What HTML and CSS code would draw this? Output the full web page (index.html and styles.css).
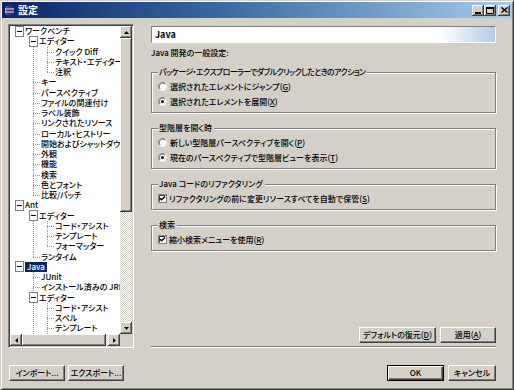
FILE: index.html
```html
<!DOCTYPE html>
<html lang="ja">
<head>
<meta charset="utf-8">
<title>設定</title>
<link rel="stylesheet" href="styles.css">
</head>
<body>
<div class="window">
  <div class="titlebar">
    <svg class="appicon" width="11" height="11" viewBox="0 0 11 11">
      <circle cx="5.5" cy="5.5" r="5" fill="#3d3384"/>
      <path d="M1 4h9M1 7h9" stroke="#e8e4f4" stroke-width="1"/>
      <path d="M5 0.6A5 5 0 0 0 5 10.4A4 5 0 0 1 5 0.6z" fill="#b8b0e0"/>
    </svg>
    <span class="title">設定</span>
    <div class="caption-btns">
      <span class="cbtn"><svg width="6" height="2" viewBox="0 0 6 2"><rect width="6" height="2" fill="#000"/></svg></span>
      <span class="cbtn"><svg width="8" height="7" viewBox="0 0 8 7"><path d="M0.5 0.5h7v6h-7z" fill="none" stroke="#000"/><rect width="8" height="2" fill="#000"/></svg></span>
      <span class="cbtn close"><svg width="7" height="6" viewBox="0 0 7 6"><path d="M0.5 0.5L6.5 5.5M6.5 0.5L0.5 5.5" stroke="#000" stroke-width="1.4"/></svg></span>
    </div>
  </div>

  <div class="client">
    <div class="main">
      <div class="tree">
        <div class="tree-view">
          <div class="row"><i class="c box"></i><span class="lbl">ワークベンチ</span></div>
          <div class="row"><i class="c e"></i><i class="c box v"></i><span class="lbl">エディター</span></div>
          <div class="row"><i class="c e"></i><i class="c v"></i><i class="c tee"></i><span class="lbl">クイック Diff</span></div>
          <div class="row"><i class="c e"></i><i class="c v"></i><i class="c tee"></i><span class="lbl">テキスト・エディター</span></div>
          <div class="row"><i class="c e"></i><i class="c v"></i><i class="c ell"></i><span class="lbl">注釈</span></div>
          <div class="row"><i class="c e"></i><i class="c tee"></i><span class="lbl">キー</span></div>
          <div class="row"><i class="c e"></i><i class="c tee"></i><span class="lbl">パースペクティブ</span></div>
          <div class="row"><i class="c e"></i><i class="c tee"></i><span class="lbl">ファイルの関連付け</span></div>
          <div class="row"><i class="c e"></i><i class="c tee"></i><span class="lbl">ラベル装飾</span></div>
          <div class="row"><i class="c e"></i><i class="c tee"></i><span class="lbl">リンクされたリソース</span></div>
          <div class="row"><i class="c e"></i><i class="c tee"></i><span class="lbl">ローカル・ヒストリー</span></div>
          <div class="row"><i class="c e"></i><i class="c tee"></i><span class="lbl">開始およびシャットダウン</span></div>
          <div class="row"><i class="c e"></i><i class="c tee"></i><span class="lbl">外観</span></div>
          <div class="row"><i class="c e"></i><i class="c tee"></i><span class="lbl">機能</span></div>
          <div class="row"><i class="c e"></i><i class="c tee"></i><span class="lbl">検索</span></div>
          <div class="row"><i class="c e"></i><i class="c tee"></i><span class="lbl">色とフォント</span></div>
          <div class="row"><i class="c e"></i><i class="c ell"></i><span class="lbl">比較/パッチ</span></div>
          <div class="row"><i class="c box"></i><span class="lbl">Ant</span></div>
          <div class="row"><i class="c e"></i><i class="c box v"></i><span class="lbl">エディター</span></div>
          <div class="row"><i class="c e"></i><i class="c v"></i><i class="c tee"></i><span class="lbl">コード・アシスト</span></div>
          <div class="row"><i class="c e"></i><i class="c v"></i><i class="c tee"></i><span class="lbl">テンプレート</span></div>
          <div class="row"><i class="c e"></i><i class="c v"></i><i class="c ell"></i><span class="lbl">フォーマッター</span></div>
          <div class="row"><i class="c e"></i><i class="c ell"></i><span class="lbl">ランタイム</span></div>
          <div class="row"><i class="c box"></i><span class="lbl selected">Java</span></div>
          <div class="row"><i class="c e"></i><i class="c tee"></i><span class="lbl">JUnit</span></div>
          <div class="row"><i class="c e"></i><i class="c tee"></i><span class="lbl">インストール済みの JRE</span></div>
          <div class="row"><i class="c e"></i><i class="c box v"></i><span class="lbl">エディター</span></div>
          <div class="row"><i class="c e"></i><i class="c v"></i><i class="c tee"></i><span class="lbl">コード・アシスト</span></div>
          <div class="row"><i class="c e"></i><i class="c v"></i><i class="c tee"></i><span class="lbl">スペル</span></div>
          <div class="row"><i class="c e"></i><i class="c v"></i><i class="c tee"></i><span class="lbl">テンプレート</span></div>
          <div class="row"><i class="c e"></i><i class="c v"></i><i class="c tee"></i><span class="lbl">フォーマッター</span></div>
        </div>
        <div class="vscroll">
          <span class="sbtn"><svg width="5" height="3" viewBox="0 0 5 3"><path d="M0 3L2.5 0L5 3z" fill="#000"/></svg></span>
          <span class="thumb vthumb"></span>
          <span class="track"></span>
          <span class="sbtn"><svg width="5" height="3" viewBox="0 0 5 3"><path d="M0 0L2.5 3L5 0z" fill="#000"/></svg></span>
        </div>
        <div class="hscroll">
          <span class="sbtn"><svg width="3" height="5" viewBox="0 0 3 5"><path d="M3 0L0 2.5L3 5z" fill="#000"/></svg></span>
          <span class="thumb hthumb"></span>
          <span class="track"></span>
          <span class="sbtn"><svg width="3" height="5" viewBox="0 0 3 5"><path d="M0 0L3 2.5L0 5z" fill="#000"/></svg></span>
        </div>
        <div class="corner"></div>
      </div>

      <div class="page">
        <div class="page-header">Java</div>
        <div class="desc">Java 開発の一般設定:</div>

        <div class="group">
          <span class="legend legend-long">パッケージ・エクスプローラーでダブルクリックしたときのアクション</span>
          <div class="opt">
            <svg class="radio" width="9" height="9" viewBox="0 0 12 12"><circle cx="6" cy="6" r="5.5" fill="#fff"/><path d="M2.1 9.9A5.5 5.5 0 0 1 9.9 2.1" fill="none" stroke="#808080"/><path d="M2.8 9.2A4.5 4.5 0 0 1 9.2 2.8" fill="none" stroke="#404040"/></svg>
            <span>選択されたエレメントにジャンプ(<u>G</u>)</span>
          </div>
          <div class="opt">
            <svg class="radio" width="9" height="9" viewBox="0 0 12 12"><circle cx="6" cy="6" r="5.5" fill="#fff"/><path d="M2.1 9.9A5.5 5.5 0 0 1 9.9 2.1" fill="none" stroke="#808080"/><path d="M2.8 9.2A4.5 4.5 0 0 1 9.2 2.8" fill="none" stroke="#404040"/><circle cx="6" cy="6" r="2" fill="#000"/></svg>
            <span>選択されたエレメントを展開(<u>X</u>)</span>
          </div>
        </div>

        <div class="group">
          <span class="legend">型階層を開く時</span>
          <div class="opt">
            <svg class="radio" width="9" height="9" viewBox="0 0 12 12"><circle cx="6" cy="6" r="5.5" fill="#fff"/><path d="M2.1 9.9A5.5 5.5 0 0 1 9.9 2.1" fill="none" stroke="#808080"/><path d="M2.8 9.2A4.5 4.5 0 0 1 9.2 2.8" fill="none" stroke="#404040"/></svg>
            <span>新しい型階層パースペクティブを開く(<u>P</u>)</span>
          </div>
          <div class="opt">
            <svg class="radio" width="9" height="9" viewBox="0 0 12 12"><circle cx="6" cy="6" r="5.5" fill="#fff"/><path d="M2.1 9.9A5.5 5.5 0 0 1 9.9 2.1" fill="none" stroke="#808080"/><path d="M2.8 9.2A4.5 4.5 0 0 1 9.2 2.8" fill="none" stroke="#404040"/><circle cx="6" cy="6" r="2" fill="#000"/></svg>
            <span>現在のパースペクティブで型階層ビューを表示(<u>T</u>)</span>
          </div>
        </div>

        <div class="group">
          <span class="legend">Java コードのリファクタリング</span>
          <div class="opt chk">
            <svg class="check" width="9" height="9" viewBox="0 0 9 9"><rect x="0.5" y="0.5" width="8" height="8" fill="#fff" stroke="#808080"/><path d="M1.5 7.5V1.5H7.5" fill="none" stroke="#404040"/><path d="M2 4.2L3.6 5.8L7 2.4" fill="none" stroke="#000" stroke-width="1.4"/></svg>
            <span>リファクタリングの前に変更リソースすべてを自動で保管(<u>S</u>)</span>
          </div>
        </div>

        <div class="group">
          <span class="legend">検索</span>
          <div class="opt chk">
            <svg class="check" width="9" height="9" viewBox="0 0 9 9"><rect x="0.5" y="0.5" width="8" height="8" fill="#fff" stroke="#808080"/><path d="M1.5 7.5V1.5H7.5" fill="none" stroke="#404040"/><path d="M2 4.2L3.6 5.8L7 2.4" fill="none" stroke="#000" stroke-width="1.4"/></svg>
            <span>縮小検索メニューを使用(<u>R</u>)</span>
          </div>
        </div>

        <div class="page-buttons">
          <span class="btn btn-restore">デフォルトの復元(<u>D</u>)</span>
          <span class="btn btn-apply">適用(<u>A</u>)</span>
        </div>
        <div class="separator"></div>
      </div>
    </div>

    <div class="bottom">
      <span class="btn btn-wide">インポート...</span>
      <span class="btn btn-wide">エクスポート...</span>
      <span class="spacer"></span>
      <span class="btn btn-ok default">OK</span>
      <span class="btn btn-cancel">キャンセル</span>
    </div>
  </div>
</div>
</body>
</html>
```

FILE: styles.css
```css
* { box-sizing: border-box; }

html, body {
  margin: 0;
  padding: 0;
}

body {
  width: 514px;
  height: 390px;
  overflow: hidden;
  background: #d4d0c8;
  font-family: "Noto Sans CJK JP", "Noto Sans", sans-serif;
  font-size: 8px;
  font-weight: 500;
  font-feature-settings: "palt" 1;
  color: #000;
}

.window {
  width: 514px;
  height: 390px;
  display: flex;
  flex-direction: column;
  background: #d4d0c8;
  border: 1px solid;
  border-color: #d4d0c8 #404040 #404040 #d4d0c8;
  box-shadow: inset 1px 1px #fff, inset -1px -1px #808080;
  padding: 1px;
}

/* ---------- title bar ---------- */
.titlebar {
  height: 16px;
  flex: none;
  display: flex;
  align-items: center;
  padding: 0 2px 0 2px;
  background: linear-gradient(to right, #0a246a 0%, #3a6ea5 45%, #a6caf0 100%);
}

.appicon { flex: none; margin-right: 3px; }

.title {
  color: #fff;
  font-weight: bold;
  font-size: 10px;
  line-height: 16px;
}

.caption-btns {
  margin-left: auto;
  display: flex;
  align-items: center;
}

.cbtn {
  width: 12px;
  height: 11px;
  display: flex;
  align-items: center;
  justify-content: center;
  background: #d4d0c8;
  box-shadow: inset -1px -1px #404040, inset 1px 1px #fff, inset -2px -2px #808080;
}

.cbtn:first-child { align-items: flex-end; padding-bottom: 2px; }
.cbtn.close { margin-left: 2px; }

/* ---------- client ---------- */
.client {
  flex: 1;
  display: flex;
  flex-direction: column;
}

.main {
  display: flex;
  gap: 17px;
  padding: 6px 0 0 6px;
}

/* ---------- tree ---------- */
.tree {
  width: 126px;
  height: 324px;
  flex: none;
  display: grid;
  grid-template-columns: 110px 12px;
  grid-template-rows: 308px 12px;
  border: 1px solid;
  border-color: #808080 #fff #fff #808080;
  box-shadow: inset 1px 1px #404040, inset -1px -1px #d4d0c8;
  padding: 1px;
  background: #d4d0c8;
}

.tree-view {
  background: #fff;
  overflow: hidden;
  padding-left: 3px;
  line-height: 10.25px;
}

.row {
  display: flex;
  height: 10.25px;
  white-space: nowrap;
  align-items: stretch;
}

.c {
  flex: none;
  width: 14px;
  display: flex;
  align-items: center;
}

.v {
  background: repeating-linear-gradient(to bottom, #9a9a9a 0 1px, transparent 1px 2px) 6px 0 / 1px 100% no-repeat;
}

.tee {
  width: 13px;
  background:
    repeating-linear-gradient(to bottom, #9a9a9a 0 1px, transparent 1px 2px) 6px 0 / 1px 100% no-repeat,
    repeating-linear-gradient(to right, #9a9a9a 0 1px, transparent 1px 2px) 6px 5px / 7px 1px no-repeat;
}

.ell {
  width: 13px;
  background:
    repeating-linear-gradient(to bottom, #9a9a9a 0 1px, transparent 1px 2px) 6px 0 / 1px 5px no-repeat,
    repeating-linear-gradient(to right, #9a9a9a 0 1px, transparent 1px 2px) 6px 5px / 7px 1px no-repeat;
}

.box { width: 11px; }

.box::after {
  content: "";
  width: 9px;
  height: 9px;
  margin-left: 2px;
  border: 1px solid #808080;
  background: linear-gradient(#000, #000) center / 5px 1px no-repeat, #fff;
}

.lbl {
  padding: 0 1px;
  line-height: 10.25px;
}

.lbl.selected {
  background: #0a246a;
  color: #fff;
  margin-left: 1px;
  padding: 0 2px;
}

/* ---------- scrollbars ---------- */
.vscroll {
  display: grid;
  grid-template-rows: 12px 174px 1fr 12px;
}

.hscroll {
  display: grid;
  grid-template-columns: 12px 84px 1fr 12px;
}

.sbtn, .thumb {
  display: flex;
  align-items: center;
  justify-content: center;
  background: #d4d0c8;
  box-shadow: inset -1px -1px #404040, inset 1px 1px #fff, inset -2px -2px #808080;
}

.track {
  background: repeating-conic-gradient(#fff 0 25%, #d4d0c8 0 50%) 0 0 / 2px 2px;
}

.corner { background: #d4d0c8; }

/* ---------- page ---------- */
.page {
  width: 345px;
  height: 324px;
  flex: none;
  display: flex;
  flex-direction: column;
}

.page-header {
  margin-top: 2px;
  height: 17px;
  flex: none;
  border: 1px solid;
  border-color: #808080 #fff #fff #808080;
  background: linear-gradient(to right, #fff 0%, #fff 84%, #b4cbe9 100%);
  font-weight: bold;
  font-size: 9px;
  line-height: 15px;
  padding-left: 3px;
}

.desc {
  margin-top: 4px;
  height: 12px;
  line-height: 12px;
}

.group {
  margin-top: 13px;
  display: flex;
  flex-direction: column;
  border: 1px solid #808080;
  box-shadow: inset 1px 1px #fff, 1px 1px #fff;
  padding: 6px 0 3px 6px;
}

.group + .group { margin-top: 15px; }

.legend {
  align-self: flex-start;
  height: 10px;
  line-height: 10px;
  margin: -12px 0 2px 0;
  padding: 0 2px 0 1px;
  background: #d4d0c8;
}

.legend-long { letter-spacing: -0.65px; }

.opt {
  height: 15px;
  display: flex;
  align-items: center;
  gap: 3px;
  white-space: nowrap;
}

.opt.chk { gap: 2px; }

.radio, .check { flex: none; }

u { text-decoration: underline; text-underline-offset: 1px; }

.page-buttons {
  margin-top: auto;
  display: flex;
  justify-content: flex-end;
  gap: 4px;
}

.btn {
  height: 16px;
  display: flex;
  align-items: center;
  justify-content: center;
  background: #d4d0c8;
  border: 1px solid;
  border-color: #fff #404040 #404040 #fff;
  box-shadow: inset -1px -1px #808080;
  white-space: nowrap;
  line-height: 14px;
}

.btn-restore { width: 77px; }
.btn-apply { width: 56px; }

.separator {
  margin-top: 3px;
  height: 2px;
  border-top: 1px solid #808080;
  border-bottom: 1px solid #fff;
}

/* ---------- bottom bar ---------- */
.bottom {
  display: flex;
  align-items: center;
  gap: 3px;
  padding: 17px 16px 0 7px;
}

.spacer { flex: 1; }

.btn-wide { width: 56px; }
.btn-ok { width: 57px; }
.btn-cancel { width: 48px; margin-left: 1px; }

.btn.default {
  border-color: #000;
  box-shadow: inset 1px 1px #fff, inset -1px -1px #404040, inset -2px -2px #808080;
}
```
